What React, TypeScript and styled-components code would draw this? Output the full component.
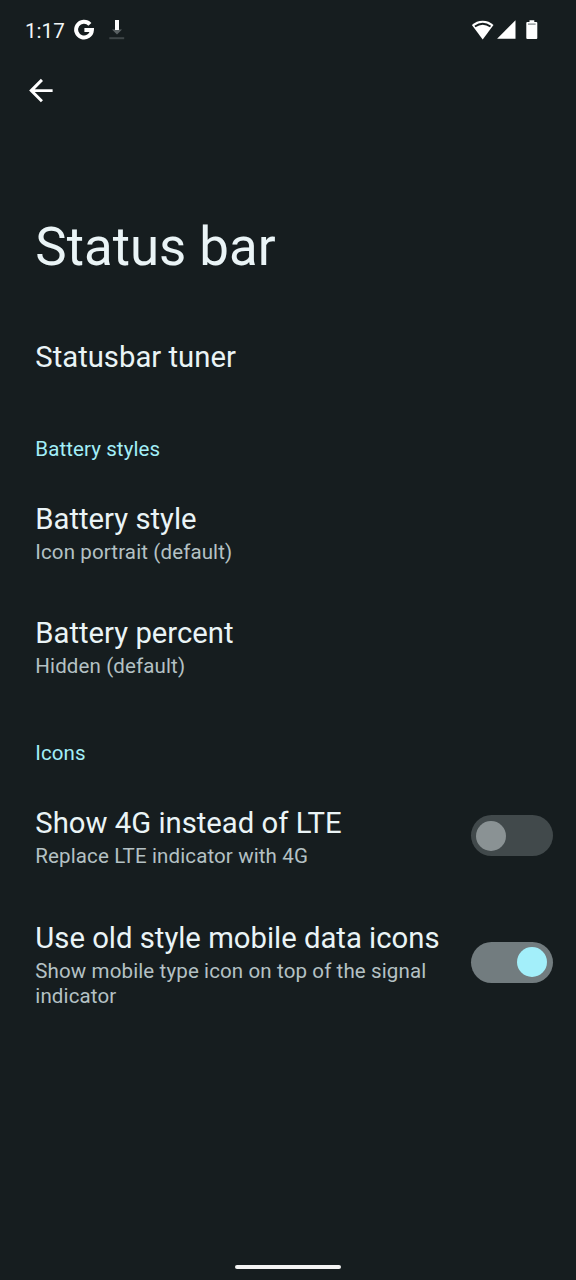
import React, { useState } from 'react';
import styled, { createGlobalStyle } from 'styled-components';

const GlobalStyle = createGlobalStyle`
  * { box-sizing: border-box; }
  body {
    margin: 0;
    background: #161d1f;
    font-family: Roboto, "Liberation Sans", sans-serif;
    -webkit-font-smoothing: antialiased;
  }
`;

const Screen = styled.div`
  width: 576px;
  height: 1280px;
  display: flex;
  flex-direction: column;
  background: #161d1f;
  color: #eaf4f6;
  overflow: hidden;
`;

const SystemBar = styled.header`
  height: 60px;
  padding: 0 38px 0 25px;
  display: flex;
  align-items: center;
  justify-content: space-between;
  color: #fff;
`;

const BarGroup = styled.div<{ $gap: number }>`
  display: flex;
  align-items: center;
  gap: ${({ $gap }) => $gap}px;

  svg { display: block; overflow: visible; }
  svg:last-child { margin-left: 6px; }
`;

const Clock = styled.span`
  width: 41px;
  font-size: 20.6px;
  line-height: 24px;
  padding-top: 1px;
  color: #f2f6f7;
`;

const Toolbar = styled.div`
  height: 61px;
  padding: 0 23px;
  display: flex;
  align-items: center;
`;

const BackButton = styled.button`
  padding: 0;
  border: 0;
  background: none;
  color: #fff;

  svg { display: block; }
`;

const PageTitle = styled.h1`
  margin: 95px 0 0;
  padding: 0 35.3px;
  font-size: 52.8px;
  font-weight: 400;
  line-height: 62px;
`;

const PreferenceList = styled.main`
  flex: 1;
  padding-top: 32px;
`;

const Row = styled.div`
  display: flex;
  align-items: center;
  justify-content: space-between;
  padding: 30.2px 23.5px 21.5px 35.3px;
`;

const RowText = styled.div`
  flex: 1;
  max-width: 412px;
`;

const RowTitle = styled.div`
  font-size: 29.27px;
  line-height: 34px;
  white-space: nowrap;
`;

const Summary = styled.div`
  margin-top: 4px;
  font-size: 20.53px;
  line-height: 24.8px;
  letter-spacing: 0.12px;
  color: #b4c1c4;
`;

const Category = styled.h2`
  margin: 0;
  padding: 41px 35.3px 9.9px;
  font-size: 20.53px;
  font-weight: 400;
  line-height: 24.8px;
  letter-spacing: 0.09px;
  color: #a2eef8;
`;

const Track = styled.button<{ $on: boolean }>`
  width: 82px;
  height: 41px;
  margin: 0 0 4.2px;
  padding: 0 5.5px;
  border: 0;
  border-radius: 21px;
  display: flex;
  align-items: center;
  justify-content: ${({ $on }) => ($on ? 'flex-end' : 'flex-start')};
  background: ${({ $on }) => ($on ? '#727c7f' : '#41494b')};
`;

const Thumb = styled.span<{ $on: boolean }>`
  width: 30px;
  height: 30px;
  border-radius: 50%;
  background: ${({ $on }) => ($on ? '#a3effa' : '#8a9294')};
`;

const NavArea = styled.footer`
  height: 15px;
  display: flex;
  justify-content: center;
`;

const NavPill = styled.div`
  width: 106px;
  height: 4px;
  border-radius: 2px;
  background: #f3f3f3;
`;

const GoogleIcon = () => (
  <svg width="21" height="21" viewBox="0 0 21 21" fill="none" stroke="currentColor" strokeWidth="4">
    <path d="M15.9 4.3A7.9 7.9 0 1 0 17.9 10.1H10.4" />
  </svg>
);

const DownloadIcon = () => (
  <svg width="16" height="20" viewBox="0 0 16 20">
    <path d="M3 9.5H13L8 14.5Z" fill="#596062" />
    <path d="M6 0H10V10H6Z" fill="#fff" />
    <path d="M0.3 17.2H15.2V19.2H0.3Z" fill="#3f4648" />
  </svg>
);

const WifiIcon = () => (
  <svg width="22" height="20" viewBox="0 0 22 20">
    <path d="M10.7 19.4L-0.1 5.1C2.9 2.2 6.5 0.7 10.7 0.7S18.5 2.2 21.5 5.1Z" fill="#fff" />
    <path d="M2.9 6.6C7.7 3.1 13.7 3.1 18.5 6.6" fill="none" stroke="#161d1f" strokeWidth="1.8" />
  </svg>
);

const SignalIcon = () => (
  <svg width="19" height="20" viewBox="0 0 19 20">
    <path d="M17.5 0.2V18.8H-0.9Z" fill="#fff" />
  </svg>
);

const BatteryIcon = () => (
  <svg width="12" height="20" viewBox="0 0 12 20">
    <path d="M3.5 0.2H8.3V2H10.3Q11.3 2 11.3 3V18Q11.3 19 10.3 19H1.3Q0.3 19 0.3 18V3Q0.3 2 1.3 2H3.5Z" fill="#fff" />
    <path d="M2 3.5H9.6V4.7H2Z" fill="#788082" />
  </svg>
);

const BackIcon = () => (
  <svg width="35.2" height="35.2" viewBox="0 0 24 24" fill="currentColor">
    <path d="M20.2 11H8.03l5.59-5.59L12.2 4l-8 8 8 8 1.41-1.41L8.03 13H20.2v-2z" />
  </svg>
);

interface PreferenceProps {
  title: string;
  summary?: string;
  children?: React.ReactNode;
}

const Preference = ({ title, summary, children }: PreferenceProps) => (
  <Row>
    <RowText>
      <RowTitle>{title}</RowTitle>
      {summary && <Summary>{summary}</Summary>}
    </RowText>
    {children}
  </Row>
);

const Toggle = ({ label, initial }: { label: string; initial: boolean }) => {
  const [on, setOn] = useState(initial);
  return (
    <Track role="switch" aria-checked={on} aria-label={label} $on={on} onClick={() => setOn(!on)}>
      <Thumb $on={on} />
    </Track>
  );
};

export default function App() {
  return (
    <Screen>
      <GlobalStyle />
      <SystemBar>
        <BarGroup $gap={8}>
          <Clock>1:17</Clock>
          <GoogleIcon />
          <DownloadIcon />
        </BarGroup>
        <BarGroup $gap={3.5}>
          <WifiIcon />
          <SignalIcon />
          <BatteryIcon />
        </BarGroup>
      </SystemBar>
      <Toolbar>
        <BackButton aria-label="Back">
          <BackIcon />
        </BackButton>
      </Toolbar>
      <PageTitle>Status bar</PageTitle>
      <PreferenceList>
        <Preference title="Statusbar tuner" />
        <Category>Battery styles</Category>
        <Preference title="Battery style" summary="Icon portrait (default)" />
        <Preference title="Battery percent" summary="Hidden (default)" />
        <Category>Icons</Category>
        <Preference title="Show 4G instead of LTE" summary="Replace LTE indicator with 4G">
          <Toggle label="Show 4G instead of LTE" initial={false} />
        </Preference>
        <Preference
          title="Use old style mobile data icons"
          summary="Show mobile type icon on top of the signal indicator"
        >
          <Toggle label="Use old style mobile data icons" initial />
        </Preference>
      </PreferenceList>
      <NavArea>
        <NavPill />
      </NavArea>
    </Screen>
  );
}
